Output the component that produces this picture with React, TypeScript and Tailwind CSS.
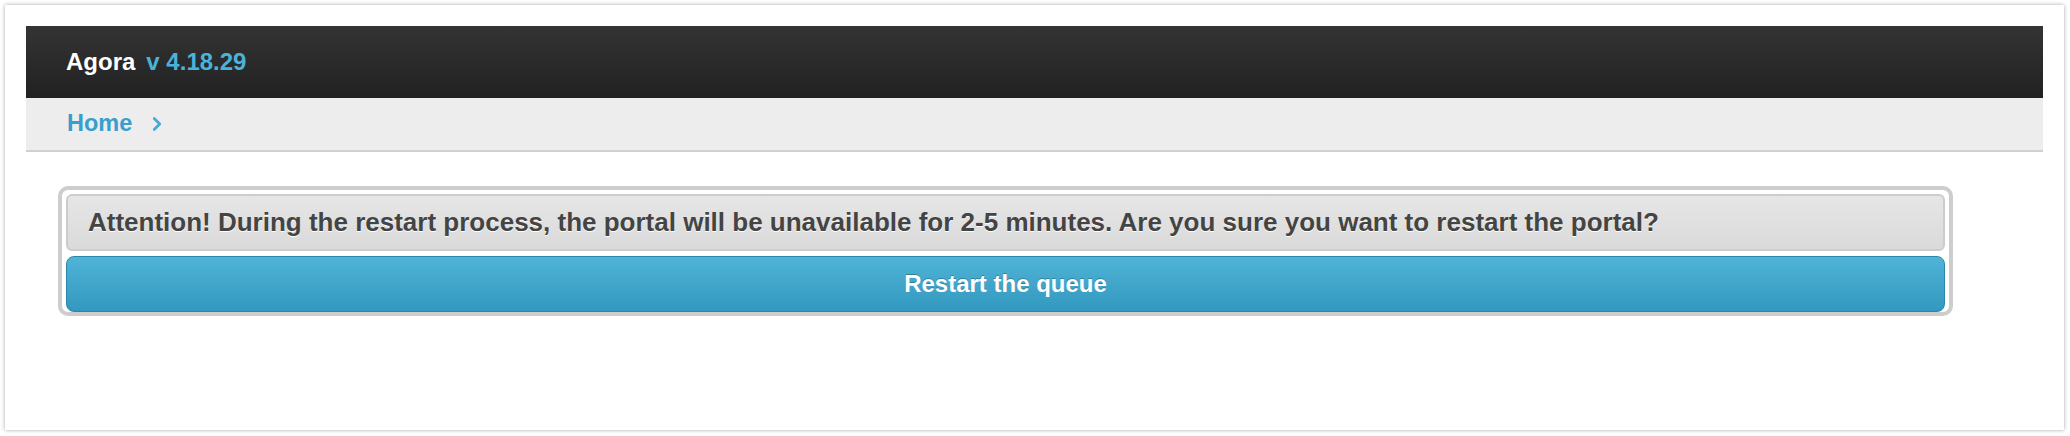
import { ChevronRight } from "lucide-react";

const FONT = "font-['Liberation_Sans',Arial,sans-serif]";

export default function App() {
  return (
    <div className={`${FONT} h-[436px] w-[2070px] bg-white p-[5px]`}>
      <div className="flex h-[425px] w-[2059px] flex-col bg-white px-[21px] pt-[21px] shadow-[0_0_4px_rgba(0,0,0,0.35)]">
        {/* Top bar */}
        <header className="flex h-[72px] items-center bg-gradient-to-b from-[#343434] to-[#212121] pl-[40px]">
          <span className="text-[24px] font-bold text-white">Agora</span>
          <span className="ml-[11px] text-[24px] font-bold text-[#4ab3da]">
            v 4.18.29
          </span>
        </header>

        {/* Breadcrumbs */}
        <nav className="flex h-[54px] items-center border-b-2 border-[#d0d0d0] bg-[#ededed] pl-[41px]">
          <a className="text-[23.5px] font-bold text-[#379fcc]">Home</a>
          <ChevronRight
            className="ml-[14px] h-[22px] w-[22px] text-[#4aa9d2]"
            strokeWidth={3}
          />
        </nav>

        {/* Confirmation */}
        <div className="ml-[32px] mt-[34px] w-[1895px] rounded-[10px] border-4 border-[#cdcdcd] px-[4px] pt-[4px]">
          <div className="flex h-[57px] items-center rounded-[6px] border-2 border-[#cccccc] bg-gradient-to-b from-[#e6e6e6] to-[#dadada] pl-[20px]">
            <p className="text-[26px] font-bold text-[#444444] [text-shadow:0_1px_0_#ffffff]">
              Attention! During the restart process, the portal will be unavailable for 2-5 minutes. Are you sure you want to restart the portal?
            </p>
          </div>
          <button
            type="button"
            className="mt-[5px] flex h-[56px] w-full items-center justify-center rounded-[8px] border border-[#2a86aa] bg-gradient-to-b from-[#4fb4d7] to-[#3398bf] text-[24px] font-bold text-white [text-shadow:0_-1px_0_rgba(0,0,0,0.25)]"
          >
            Restart the queue
          </button>
        </div>
      </div>
    </div>
  );
}
